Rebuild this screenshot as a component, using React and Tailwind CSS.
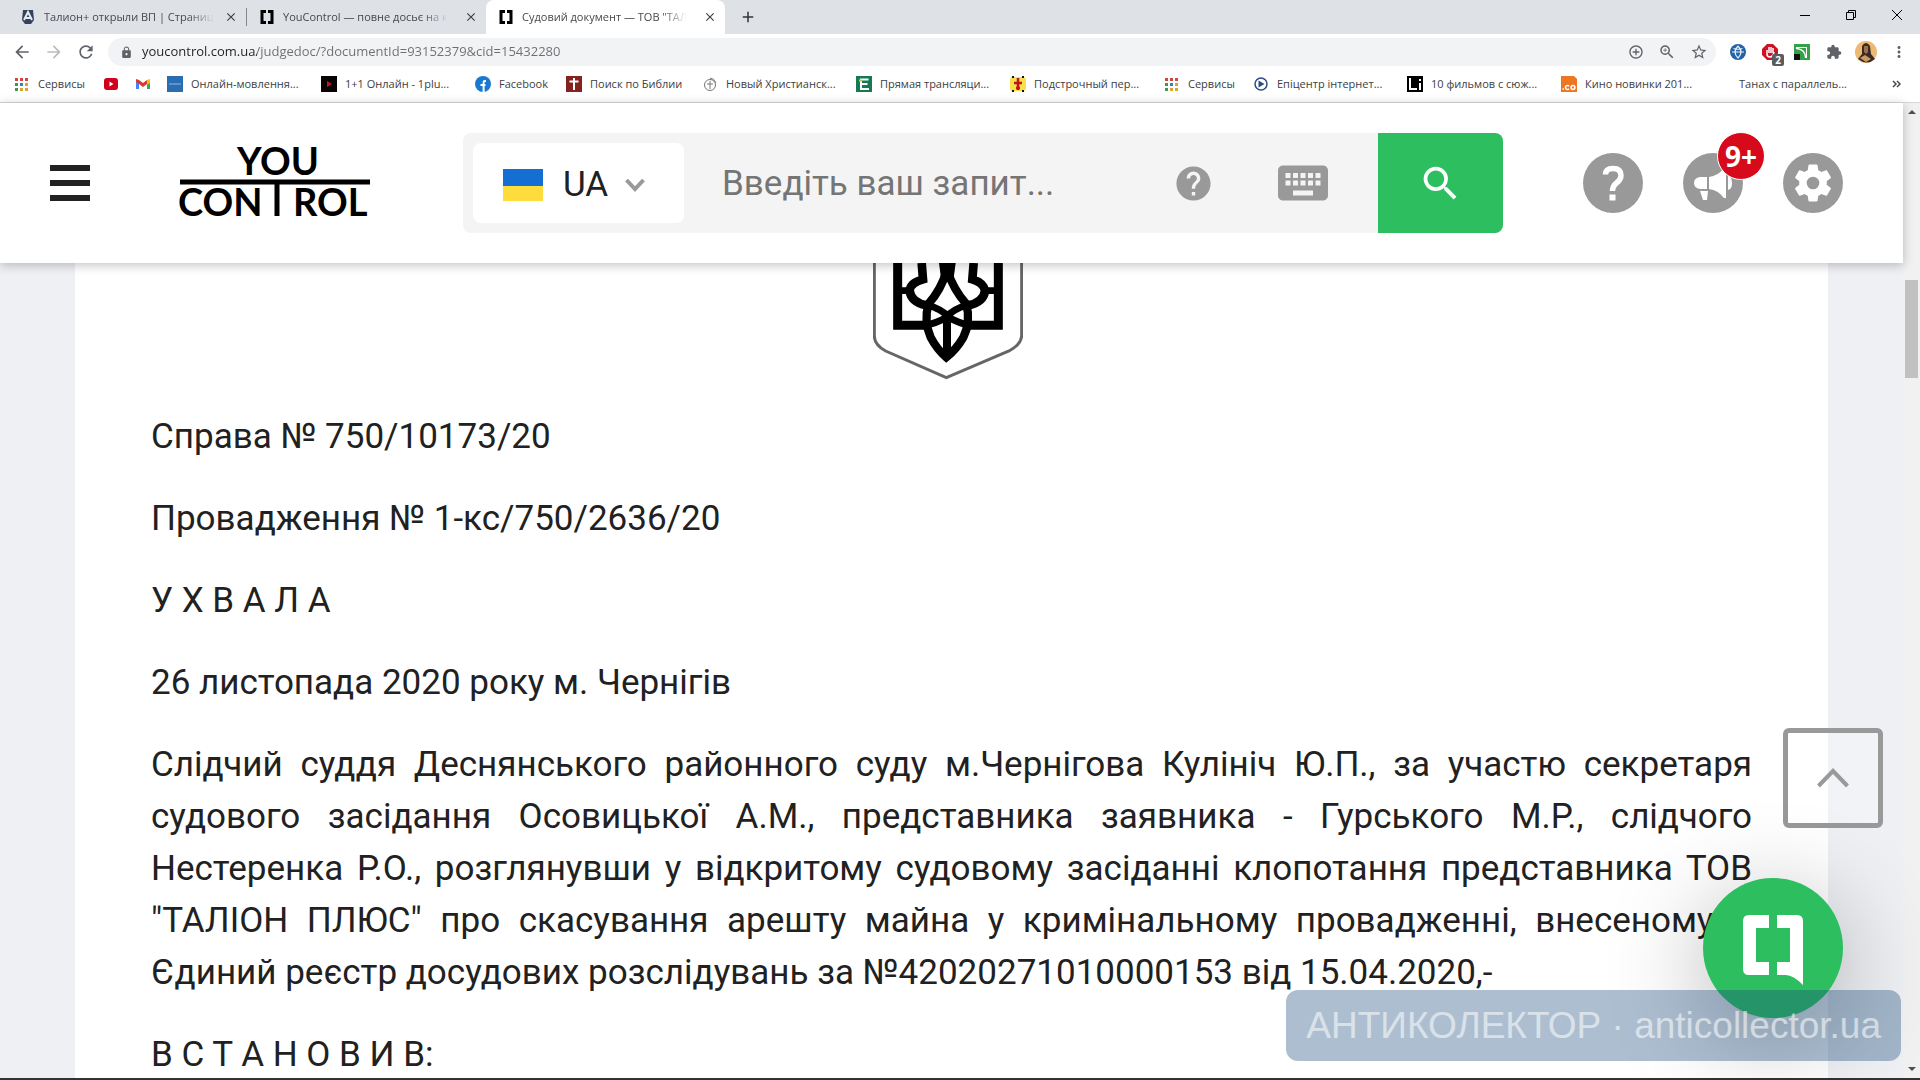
import React from 'react';
import {
    MdArrowBack, MdArrowForward, MdRefresh, MdLock, MdStarBorder, MdZoomIn, MdAddCircleOutline,
    MdExtension, MdMoreVert, MdHelp, MdKeyboard, MdSearch, MdClose, MdAdd,
} from 'react-icons/md';

const AppsIcon = () => (
    <svg viewBox="0 0 16 16" className="size-4 shrink-0">
        {[['#d0473e', '#d0473e', '#d0473e'], ['#3d9a4c', '#3c82b8', '#d9a52c'], ['#3d9a4c', '#d9a52c', '#d9a52c']].map((row, y) =>
            row.map((fill, x) => <rect key={`${x}${y}`} x={1 + x * 5} y={2 + y * 5} width="3" height="3" fill={fill} />)
        )}
    </svg>
);

const YouTubeIcon = () => (
    <svg viewBox="0 0 16 16" className="size-4 shrink-0">
        <rect x="1" y="2" width="14" height="12" rx="3" fill="#d0021b" />
        <path d="M6.5 5.5v5l4-2.5z" fill="#fff" />
    </svg>
);

const GmailIcon = () => (
    <svg viewBox="0 0 16 16" className="size-4 shrink-0">
        <path d="M1 4v9h3V6z" fill="#4285f4" />
        <path d="M15 4v9h-3V6z" fill="#34a853" />
        <path d="M12 4l3-1v4l-3 2z" fill="#fbbc04" />
        <path d="M1 3l3 1 4 3 4-3v4l-4 3-4-3-3-2z" fill="#d93a2f" />
    </svg>
);

const BlueIcon = () => (
    <svg viewBox="0 0 16 16" className="size-4 shrink-0">
        <path d="M0 0h16v16H0z" fill="#2b6cb3" />
        <path d="M2 8h12" stroke="#8fbbe4" />
    </svg>
);

const OnePlusIcon = () => (
    <svg viewBox="0 0 16 16" className="size-4 shrink-0">
        <path d="M0 0h16v16H0z" fill="#080204" />
        <path d="M6 5v6l5-3z" fill="#c41230" />
    </svg>
);

const FacebookIcon = () => (
    <svg viewBox="0 0 16 16" className="size-4 shrink-0">
        <circle cx="8" cy="8" r="8" fill="#1b78cf" />
        <path d="M11 5H9.8Q8.6 5 8.6 6.2V16M5.5 9h5" fill="none" stroke="#fff" strokeWidth="2" />
    </svg>
);

const BibleIcon = () => (
    <svg viewBox="0 0 16 16" className="size-4 shrink-0">
        <path d="M0 0h16v16H0z" fill="#84221f" />
        <path d="M8 2v12M3.500 5.500h9" stroke="#fff" strokeWidth="2" />
    </svg>
);

const ChristianIcon = () => (
    <svg viewBox="0 0 16 16" className="size-4 shrink-0" fill="none" stroke="#777">
        <circle cx="8" cy="9" r="5.500" />
        <path d="M8 5v8M5 8h6M8 2q4 0 6 5" />
    </svg>
);

const EIcon = () => (
    <svg viewBox="0 0 16 16" className="size-4 shrink-0">
        <path d="M0 0h16v16H0z" fill="#157a50" />
        <path d="M12.500 3.500H5v9.500h8M5 8h6.500" fill="none" stroke="#fff" strokeWidth="2" />
        <path d="M3 4.500h3" stroke="#e8b83c" strokeWidth="2" />
    </svg>
);

const InterlinearIcon = () => (
    <svg viewBox="0 0 16 16" className="size-4 shrink-0">
        <rect y="1" width="16" height="14" rx="3" fill="#f8df4e" />
        <path d="M2 0h2v2H2zM12 0h2v2h-2zM2 14h2v2H2zM12 14h2v2h-2z" fill="#111" />
        <path d="M8 2v12M4 7h8M6 12h4" stroke="#c31313" strokeWidth="2.500" />
    </svg>
);

const PlayIcon = () => (
    <svg viewBox="0 0 16 16" className="size-4 shrink-0">
        <circle cx="8" cy="8" r="6" fill="none" stroke="#2c4d84" strokeWidth="1.500" />
        <path d="M5.500 4.500v7l6-3.500z" fill="#2c4d84" />
    </svg>
);

const LiIcon = () => (
    <svg viewBox="0 0 16 16" className="size-4 shrink-0">
        <path d="M0 0h16v16H0z" fill="#000" />
        <path d="M3 2v11h7M13 7v7M13 3v2" fill="none" stroke="#fff" strokeWidth="2" />
    </svg>
);

const CoIcon = () => (
    <svg viewBox="0 0 16 16" className="size-4 shrink-0">
        <path d="M0 0h13l3 3v13H0z" fill="#ee7522" />
        <path d="M1.500 13h1.500" stroke="#fff" strokeWidth="1.500" />
        <path d="M8 10.200a2 2 0 1 0 0 2.600" fill="none" stroke="#fff" strokeWidth="1.500" />
        <circle cx="12" cy="11.500" r="1.900" fill="none" stroke="#fff" strokeWidth="1.500" />
    </svg>
);

const BlankIcon = () => <span className="size-4 shrink-0" />;

const ShieldIcon = () => (
    <svg viewBox="0 0 16 16" className="size-4 shrink-0">
        <path d="M3 1h10l1 10-3 4H5l-3-4z" fill="#33435c" />
        <path d="M4 11L8 3l4 8M6 9h5" fill="none" stroke="#e6ebf2" strokeWidth="2" />
    </svg>
);

const BracketIcon = () => (
    <svg viewBox="0 0 16 16" className="size-4 shrink-0">
        <path d="M7 2.500H3v11h4M9 2.500h4v11H9" fill="none" stroke="#000" strokeWidth="3" />
    </svg>
);

const tabs = [
    { title: 'Талион+ открыли ВП | Страниц', Icon: ShieldIcon },
    { title: 'YouControl — повне досьє на к', Icon: BracketIcon },
    { title: 'Судовий документ — ТОВ "ТАЛ', Icon: BracketIcon, active: true },
];

const bookmarks = [
    { title: 'Сервисы', Icon: AppsIcon, width: 'w-[89px]' },
    { title: '', label: 'YouTube', Icon: YouTubeIcon, width: 'w-8' },
    { title: '', label: 'Gmail', Icon: GmailIcon, width: 'w-8' },
    { title: 'Онлайн-мовлення...', Icon: BlueIcon, width: 'w-[154px]' },
    { title: '1+1 Онлайн - 1plu...', Icon: OnePlusIcon, width: 'w-[154px]' },
    { title: 'Facebook', Icon: FacebookIcon, width: 'w-[91px]' },
    { title: 'Поиск по Библии', Icon: BibleIcon, width: 'w-[136px]' },
    { title: 'Новый Христианск...', Icon: ChristianIcon, width: 'w-[154px]' },
    { title: 'Прямая трансляци...', Icon: EIcon, width: 'w-[154px]' },
    { title: 'Подстрочный пер...', Icon: InterlinearIcon, width: 'w-[154px]' },
    { title: 'Сервисы', Icon: AppsIcon, width: 'w-[89px]' },
    { title: 'Епіцентр інтернет...', Icon: PlayIcon, width: 'w-[154px]' },
    { title: '10 фильмов с сюж...', Icon: LiIcon, width: 'w-[154px]' },
    { title: 'Кино новинки 201...', Icon: CoIcon, width: 'w-[154px]' },
    { title: 'Танах с параллель...', Icon: BlankIcon, width: 'w-[154px]' },
];

const TabStrip = () => (
    <div className="flex h-[34px] items-stretch bg-[#dee1e6] pl-2">
        {tabs.map(({ title, Icon, active }, i) => (
            <div
                key={title}
                className={`flex w-[239px] items-center gap-2 pr-2 pl-3 ${active ? 'rounded-t-lg bg-white' : ''} ${i === 0 ? 'my-2 border-r border-[#85888d]' : ''}`}
            >
                <Icon />
                <span className="mask-r-from-85% text-[11px] whitespace-nowrap text-[#45494d]">{title}</span>
                <button aria-label="Закрити вкладку" className="ml-auto shrink-0 text-[#3c4043]"><MdClose size={14} /></button>
            </div>
        ))}
        <button aria-label="Нова вкладка" className="ml-[14px] self-center text-[#333]"><MdAdd size={18} /></button>
        <div className="ml-auto flex items-center gap-[30px] pr-[15px] pb-1">
            <button aria-label="Згорнути">
                <svg viewBox="0 0 16 16" className="size-4"><path d="M3 8.500h10" stroke="#000" /></svg>
            </button>
            <button aria-label="Відновити">
                <svg viewBox="0 0 16 16" className="size-4" fill="none" stroke="#000"><path d="M3.500 5.500h7v7h-7zM5.500 5.500v-2h7v7h-2" /></svg>
            </button>
            <button aria-label="Закрити">
                <svg viewBox="0 0 16 16" className="size-4"><path d="M3 3l10 10M13 3L3 13" stroke="#000" /></svg>
            </button>
        </div>
    </div>
);

const Toolbar = () => (
    <div className="flex h-9 items-center bg-white px-3 text-[#5f6368]">
        <div className="flex w-24 items-center gap-3">
            <button aria-label="Назад"><MdArrowBack size={20} /></button>
            <button aria-label="Вперед" className="text-[#babcbe]"><MdArrowForward size={20} /></button>
            <button aria-label="Оновити"><MdRefresh size={20} /></button>
        </div>
        <div className="flex h-7 flex-1 items-center rounded-full bg-[#f1f3f4] pr-2 pl-3">
            <MdLock size={13} />
            <input
                aria-label="Адреса"
                defaultValue="youcontrol.com.ua/judgedoc/?documentId=93152379&cid=15432280"
                className="ml-[9px] flex-1 bg-[linear-gradient(to_right,#202124_115px,#6b6f73_115px)] bg-clip-text text-[13px] text-transparent outline-none"
            />
            <div className="flex items-center gap-[14px]">
                <button aria-label="Встановити"><MdAddCircleOutline size={16} /></button>
                <button aria-label="Масштаб"><MdZoomIn size={18} /></button>
                <button aria-label="Закладка"><MdStarBorder size={18} /></button>
            </div>
        </div>
        <div className="flex items-center gap-4 pl-[14px]">
            <button aria-label="Перекладач">
                <svg viewBox="0 0 16 16" className="size-4">
                    <circle cx="8" cy="8" r="8" fill="#2463a5" />
                    <path d="M8 2q-6 6 0 12q6-6 0-12M2 8h12M3.500 4.500q4.500 1.500 9 0" fill="none" stroke="#e9f2fb" strokeWidth="1.200" />
                </svg>
            </button>
            <button aria-label="AdBlock" className="relative">
                <svg viewBox="0 0 16 16" className="size-4">
                    <path d="M5 0h6l5 5v6l-5 5H5l-5-5V5z" fill="#cf1126" />
                    <path d="M5 6v4q0 3 3 3t4-5M7 9V3M9 9V3M11 9V4" fill="none" stroke="#fff" strokeWidth="1.500" />
                </svg>
                <span className="absolute top-[10px] left-[10px] h-3 w-3 rounded-xs bg-[#5a5d60] text-center text-[10px] leading-3 font-bold text-white">2</span>
            </button>
            <button aria-label="Розширення ПриватБанк">
                <svg viewBox="0 0 16 16" className="size-4">
                    <path d="M0 0h16v16H0z" fill="#36a047" />
                    <path d="M2 3h11v11h-2q0-8-9-9z" fill="#fff" />
                    <path d="M4 4h8v8q-1-7-8-8z" fill="#36a047" />
                    <path d="M0 10h6v6H0z" fill="#111" />
                </svg>
            </button>
            <button aria-label="Розширення"><MdExtension size={16} /></button>
            <button aria-label="Профіль" className="-mx-[3px]">
                <svg viewBox="0 0 22 22" className="size-[22px]">
                    <circle cx="11" cy="11" r="11" fill="#ecb873" />
                    <path d="M7 5q4-6 8 0l1 8 4 5q-8 7-17 0l4-5z" fill="#3a2b22" />
                    <path d="M9 5h4v6l-2 2-2-2z" fill="#9a7050" />
                    <path d="M5 17l5-3 6 4-5 3z" fill="#c99a6c" />
                </svg>
            </button>
            <button aria-label="Меню"><MdMoreVert size={18} /></button>
        </div>
    </div>
);

const BookmarksBar = () => (
    <nav className="flex h-[33px] items-center border-b border-[#d5d7da] bg-white pr-[15px] pb-1 pl-[14px]">
        {bookmarks.map(({ title, label, Icon, width }, i) => (
            <a key={i} href="#" aria-label={label} className={`flex shrink-0 items-center gap-2 text-[11px] whitespace-nowrap text-[#3c4043] ${width}`}>
                <Icon />
                {title}
            </a>
        ))}
        <button aria-label="Інші закладки" className="ml-auto">
            <svg viewBox="0 0 16 16" className="size-4" fill="none" stroke="#4a4d51" strokeWidth="1.500"><path d="M4 5l3 3-3 3M8 5l3 3-3 3" /></svg>
        </button>
    </nav>
);

const Logo = () => (
    <svg viewBox="0 0 190 70" className="h-[70px] w-[190px] overflow-visible" fontFamily="Lato" fontWeight="700" fontSize="38">
        <text x="57" y="27">YOU</text>
        <path d="M0 34h190M97 34v34" stroke="#000" strokeWidth="5" />
        <text x="-2" y="68">CON</text>
        <text x="113" y="68">ROL</text>
    </svg>
);

const Header = () => (
    <header className="relative z-10 flex h-40 shrink-0 items-center bg-white pr-15 pl-[50px] shadow-[0_2px_10px_rgba(0,0,0,0.25)]">
        <button aria-label="Меню" className="flex w-10 flex-col gap-[9px]">
            <span className="h-[6px] bg-[#222]" />
            <span className="h-[6px] bg-[#222]" />
            <span className="h-[6px] bg-[#222]" />
        </button>
        <a href="#" aria-label="YouControl" className="ml-[90px]"><Logo /></a>
        <form className="ml-[93px] flex h-[100px] w-[1040px] items-center rounded-lg bg-[#f4f4f4] pl-[10px] text-[35px]">
            <label className="relative flex h-20 w-[211px] items-center rounded-lg bg-white pt-1 pl-[30px]">
                <svg viewBox="0 0 40 32" className="h-8 w-10">
                    <path d="M0 0h40v17H0z" fill="#156fd3" />
                    <path d="M0 17h40v15H0z" fill="#fddc3c" />
                </svg>
                <select aria-label="Мова" className="ml-5 w-[100px] appearance-none bg-transparent text-[#212121]">
                    <option>UA</option>
                </select>
                <svg viewBox="0 0 20 14" className="pointer-events-none absolute right-[39px] h-[14px] w-5" fill="none" stroke="#999" strokeWidth="4">
                    <path d="M1.500 2l8.500 9 8.500-9" />
                </svg>
            </label>
            <input aria-label="Пошук" placeholder="Введіть ваш запит..." className="ml-[38px] min-w-0 flex-1 bg-transparent pt-[2px] text-[#212121] outline-none placeholder:text-[#757575]" />
            <button type="button" aria-label="Допомога" className="text-[#999]"><MdHelp size={41} /></button>
            <button type="button" aria-label="Клавіатура" className="mr-[45px] ml-[59px] text-[#999]"><MdKeyboard size={60} /></button>
            <button type="button" aria-label="Шукати" className="flex h-full w-[125px] items-center justify-center rounded-r-lg bg-[#2dbe60] text-white"><MdSearch size={45} /></button>
        </form>
        <div className="ml-auto flex gap-10">
            <button aria-label="Довідка">
                <svg viewBox="0 0 60 60" className="size-[60px]">
                    <circle cx="30" cy="30" r="30" fill="#999" />
                    <path d="M22.500 21.500q0-6 7.500-6 8 0 8 7 0 4-4 7-4.500 3.500-4.500 8.500" fill="none" stroke="#fff" strokeWidth="5.500" />
                    <path d="M26.500 41.500h6v6h-6z" fill="#fff" />
                </svg>
            </button>
            <button aria-label="Новини" className="relative">
                <svg viewBox="0 0 60 60" className="size-[60px]">
                    <circle cx="30" cy="30" r="30" fill="#999" />
                    <path d="M17 24h7v12h-7q-6-1-6-6t6-6zM26 24q9-1 15-9h2v30h-2q-6-8-15-9zM45 23q4 1 4 7t-4 7zM17 38h8l-1 9h-4z" fill="#fff" />
                </svg>
                <span className="absolute -top-[21px] left-[34px] flex size-12 items-center justify-center rounded-full border border-white bg-[#d70a1c] font-['Noto_Sans'] text-[28px] font-bold text-white">9+</span>
            </button>
            <button aria-label="Налаштування" className="flex size-[60px] items-center justify-center rounded-full bg-[#999] text-white">
                <svg viewBox="0 0 24 24" className="size-[46px]" fill="currentColor">
                    <path d="M19.140 12.940c.04-.3.060-.610.060-.940 0-.320-.020-.640-.070-.940l2.030-1.580c.180-.140.230-.410.120-.610l-1.920-3.320c-.120-.220-.370-.290-.590-.220l-2.390.960c-.5-.380-1.030-.7-1.620-.940l-.360-2.540c-.040-.240-.240-.410-.480-.410h-3.840c-.240 0-.430.170-.470.410l-.360 2.540c-.590.240-1.130.570-1.620.940l-2.390-.960c-.220-.080-.470 0-.590.220L2.740 8.870c-.120.210-.080.470.120.610l2.030 1.580c-.050.300-.090.630-.090.940s.02.640.070.940l-2.030 1.580c-.180.140-.230.410-.120.610l1.920 3.320c.120.220.370.290.590.220l2.390-.960c.5.380 1.030.7 1.620.940l.360 2.540c.050.240.240.410.480.410h3.840c.240 0 .440-.170.470-.410l.360-2.540c.590-.240 1.130-.560 1.620-.940l2.390.960c.220.080.470 0 .590-.220l1.920-3.320c.120-.220.070-.470-.120-.610l-2.010-1.580zM12 15.300a3.300 3.300 0 1 1 0-6.600 3.300 3.300 0 0 1 0 6.600z" />
                </svg>
            </button>
        </div>
    </header>
);

const Emblem = () => (
    <div className="flex justify-center pr-2">
        <svg viewBox="102 39 450 351" className="h-[117px] w-[150px]" fill="none" stroke="#000">
            <path d="M106 39V258Q106 285 140 303L322 383 510 303Q548 282 548 255V39" stroke="#666" strokeWidth="9" />
            <path d="M176 39V226H262M478 39V226H390" strokeWidth="27" />
            <path d="M248 39L252 88Q214 98 212 122 216 156 262 166M404 39L400 88Q434 98 438 122 434 156 388 166" strokeWidth="26" />
            <path d="M188 122H212M466 122H438" strokeWidth="20" />
            <path d="M300 39H350L343 92H307z" fill="#000" stroke="none" />
            <path d="M324 60Q306 120 268 162 254 215 275 262 294 298 322 322 352 298 373 262 396 215 382 162 344 120 324 60" strokeWidth="25" />
            <path d="M266 166Q300 172 340 208 360 218 388 226M384 166Q350 172 312 208 292 218 262 226" strokeWidth="21" />
            <path d="M324 185V325" strokeWidth="24" />
            <path d="M296 298H350L322 336z" fill="#000" stroke="none" />
        </svg>
    </div>
);

const Scrollbar = () => (
    <div className="flex w-[17px] shrink-0 flex-col items-center bg-[#f1f1f1] py-[6px]">
        <svg viewBox="0 0 8 6" className="h-[6px] w-2"><path d="M0 5l4-4 4 4z" fill="#505050" /></svg>
        <div className="mt-[165px] h-[98px] w-[13px] bg-[#c1c1c1]" />
        <svg viewBox="0 0 8 6" className="mt-auto h-[6px] w-2"><path d="M0 1l4 4 4-4z" fill="#505050" /></svg>
    </div>
);

const paragraphs = [
    'Справа № 750/10173/20',
    'Провадження № 1-кс/750/2636/20',
    'У Х В А Л А',
    '26 листопада 2020 року м. Чернігів',
    'Слідчий суддя Деснянського районного суду м.Чернігова Кулініч Ю.П., за участю секретаря судового засідання Осовицької А.М., представника заявника - Гурського М.Р., слідчого Нестеренка Р.О., розглянувши у відкритому судовому засіданні клопотання представника ТОВ "ТАЛІОН ПЛЮС" про скасування арешту майна у кримінальному провадженні, внесеному в Єдиний реєстр досудових розслідувань за №42020271010000153 від 15.04.2020,-',
    'В С Т А Н О В И В:',
];

const App = () => {
    return (
        <div className="relative flex h-screen flex-col overflow-hidden bg-white font-['Open_Sans',sans-serif]">
            <TabStrip />
            <Toolbar />
            <BookmarksBar />

            <div className="flex min-h-0 flex-1">
                <div className="flex min-w-0 flex-1 flex-col bg-[#eef0f4] font-[Roboto,sans-serif]">
                    <Header />
                    <main className="mx-[75px] min-h-0 flex-1 overflow-hidden bg-white px-[76px] text-[35px] leading-[52px] text-[#212121]">
                        <Emblem />
                        <div className="mt-[31px] space-y-[30px] text-justify">
                            {paragraphs.map((text) => <p key={text}>{text}</p>)}
                        </div>
                    </main>
                </div>
                <Scrollbar />
            </div>
            <div className="h-[2px] shrink-0 bg-[#333]" />

            {/* Floating controls */}
            <button aria-label="Вгору" className="absolute right-[37px] bottom-[252px] flex size-[100px] items-center justify-center rounded-md border-[5px] border-[#999] bg-white/20">
                <svg viewBox="0 0 32 20" className="h-5 w-8" fill="none" stroke="#999" strokeWidth="4"><path d="M1.500 18L16 3l14.500 15" /></svg>
            </button>
            <button aria-label="Чат" className="absolute right-[77px] bottom-[62px] flex size-[140px] items-center justify-center rounded-full bg-[#2dbe60] shadow-[0_20px_100px_rgba(0,0,0,0.3)]">
                <svg viewBox="0 0 60 70" className="mt-1 h-[70px] w-[60px]" fill="#fff">
                    <path d="M26 0H6Q0 0 0 6v48q0 6 6 6h20V47H13V13h13zM34 0h20q6 0 6 6v64Q50 60 43 60h-9V47h13V13H34z" />
                </svg>
            </button>
            <div className="absolute right-[19px] bottom-[19px] rounded-xl bg-[rgba(25,75,123,0.36)] px-5 font-['Liberation_Sans'] text-[37px] leading-[71px] text-white/55">
                АНТИКОЛЕКТОР · anticollector.ua
            </div>
        </div>
    );
};

export default App;
